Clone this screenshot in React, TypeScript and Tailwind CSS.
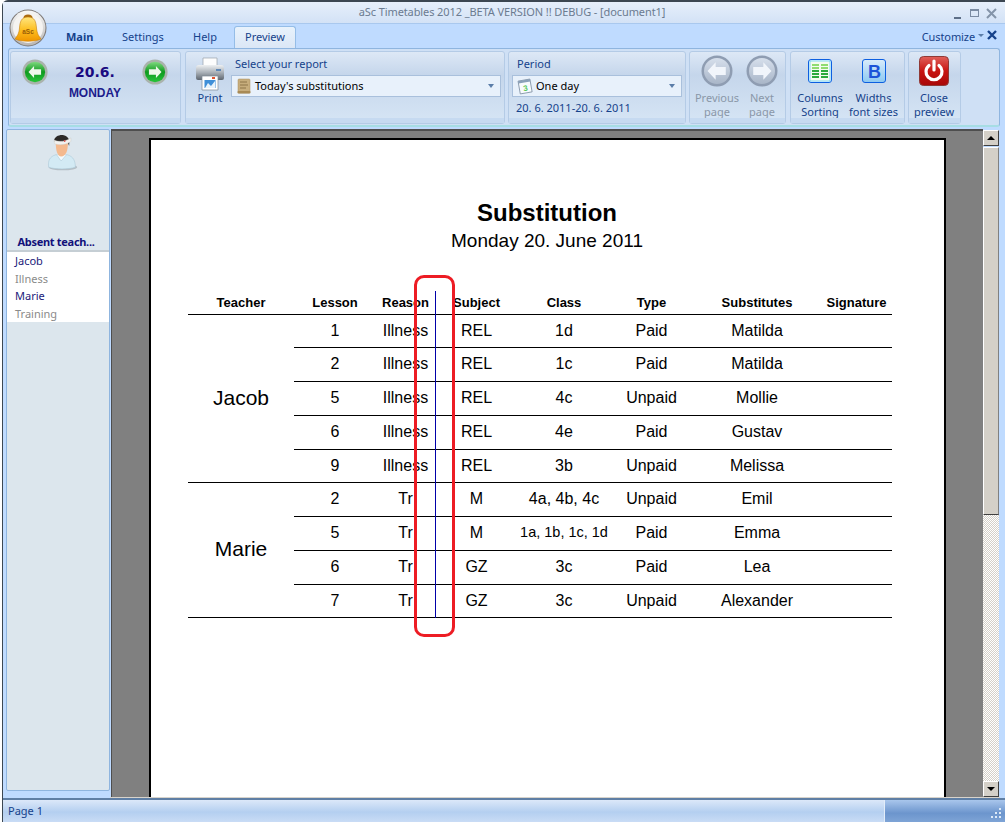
import * as React from "react"

type Row = { lesson: string; reason: string; subject: string; cls: string; type: string; sub: string; h: string; small?: boolean }

const jacob: Row[] = [
  { lesson: "1", reason: "Illness", subject: "REL", cls: "1d", type: "Paid", sub: "Matilda", h: "h-[33px]" },
  { lesson: "2", reason: "Illness", subject: "REL", cls: "1c", type: "Paid", sub: "Matilda", h: "h-[34px] pb-[1px]" },
  { lesson: "5", reason: "Illness", subject: "REL", cls: "4c", type: "Unpaid", sub: "Mollie", h: "h-[34px] pb-[1px]" },
  { lesson: "6", reason: "Illness", subject: "REL", cls: "4e", type: "Paid", sub: "Gustav", h: "h-[34px] pb-[1px]" },
  { lesson: "9", reason: "Illness", subject: "REL", cls: "3b", type: "Unpaid", sub: "Melissa", h: "h-[32px]" },
]

const marie: Row[] = [
  { lesson: "2", reason: "Tr", subject: "M", cls: "4a, 4b, 4c", type: "Unpaid", sub: "Emil", h: "h-[34px] pb-[1px]" },
  { lesson: "5", reason: "Tr", subject: "M", cls: "1a, 1b, 1c, 1d", type: "Paid", sub: "Emma", h: "h-[34px] pb-[1px]", small: true },
  { lesson: "6", reason: "Tr", subject: "GZ", cls: "3c", type: "Paid", sub: "Lea", h: "h-[34px] pb-[1px]" },
  { lesson: "7", reason: "Tr", subject: "GZ", cls: "3c", type: "Unpaid", sub: "Alexander", h: "h-[32px]" },
]

function Group({ className, children }: { className: string; children: React.ReactNode }) {
  return (
    <div className={`flex flex-col rounded-[3px] border border-[#b4cbe6] bg-[linear-gradient(#dde8f6_0%,#c5d6eb_32%,#d6e5f5_100%)] ${className}`}>
      <div className="flex min-h-0 flex-1">{children}</div>
      <div className="h-[5px] shrink-0 bg-[#c6daf1]" />
    </div>
  )
}

function Arrow({ dir, id, grey }: { dir: "l" | "r"; id: string; grey?: boolean }) {
  const size = grey ? 32 : 26
  const shape = dir === "l" ? "M-7 0 L-1 -6.5 L-1 -3 L6.5 -3 L6.5 3 L-1 3 L-1 6.5 Z" : "M7 0 L1 -6.5 L1 -3 L-6.5 -3 L-6.5 3 L1 3 L1 6.5 Z"
  return (
    <svg width={size} height={size} viewBox="-16 -16 32 32" aria-hidden>
      <defs>
        <linearGradient id={id} x1="0" y1="0" x2="0" y2="1">
          {grey ? (
            <>
              <stop offset="0" stopColor="#d6dfec" />
              <stop offset="1" stopColor="#a9b6c8" />
            </>
          ) : (
            <>
              <stop offset="0" stopColor="#7fd97f" />
              <stop offset="0.5" stopColor="#0f9a1f" />
              <stop offset="1" stopColor="#27c43a" />
            </>
          )}
        </linearGradient>
      </defs>
      <circle r="15.5" fill={grey ? "#8f9db2" : "#a9b3ab"} />
      <circle r={grey ? 13 : 12.5} fill={`url(#${id})`} />
      <path d={shape} fill={grey ? "#f1f5fb" : "#eef7ea"} transform={grey ? "scale(1.35)" : "scale(1.15)"} />
    </svg>
  )
}

function Bell() {
  return (
    <svg width="38" height="38" viewBox="0 0 38 38" aria-hidden>
      <defs>
        <linearGradient id="bellRing" x1="0" y1="0" x2="0" y2="1">
          <stop offset="0" stopColor="#f8f8f8" />
          <stop offset="1" stopColor="#b9b6b4" />
        </linearGradient>
        <linearGradient id="bellBody" x1="0" y1="0" x2="0" y2="1">
          <stop offset="0" stopColor="#ffe680" />
          <stop offset="0.55" stopColor="#fdbd1e" />
          <stop offset="1" stopColor="#ef9500" />
        </linearGradient>
      </defs>
      <circle cx="19" cy="19" r="18.5" fill="#7d7875" />
      <circle cx="19" cy="19" r="17.5" fill="url(#bellRing)" />
      <circle cx="19" cy="19" r="15" fill="#f5f3f1" />
      <ellipse cx="19" cy="9" rx="4.5" ry="3.5" fill="#a96a12" />
      <path d="M19 8 C12 8 11 13 10.5 19 C10 25 8 27 6 30 C12 33 26 33 32 30 C30 27 28 25 27.5 19 C27 13 26 8 19 8 Z" fill="url(#bellBody)" stroke="#c97f08" strokeWidth="0.6" />
      <text x="19" y="25" textAnchor="middle" fontSize="6.5" fontWeight="700" fill="#9a5c05" fontFamily="Liberation Sans, sans-serif">aSc</text>
    </svg>
  )
}

function Printer() {
  return (
    <svg width="30" height="34" viewBox="0 0 30 34" aria-hidden>
      <defs>
        <linearGradient id="prBody" x1="0" y1="0" x2="0" y2="1">
          <stop offset="0" stopColor="#eef0f2" />
          <stop offset="0.5" stopColor="#a9b0b7" />
          <stop offset="1" stopColor="#5e666f" />
        </linearGradient>
      </defs>
      <path d="M8 1 H22 V10 H8 Z" fill="#fdfdfd" stroke="#9aa2ab" strokeWidth="0.7" />
      <path d="M1 11 Q1 8 4 8 H26 Q29 8 29 11 V21 Q29 23 27 23 H3 Q1 23 1 21 Z" fill="url(#prBody)" />
      <rect x="21" y="12" width="5" height="2" fill="#5f87b5" />
      <path d="M7 19 H23 V33 H7 Z" fill="#fff" stroke="#7f8a96" strokeWidth="0.7" />
      <rect x="9.5" y="23" width="11" height="8" fill="#3f8fd8" />
      <path d="M10 31 L13 26 L16 29 L20 24 V31 Z" fill="#e8f3fb" />
      <rect x="17" y="20" width="3" height="2" fill="#e0522e" />
    </svg>
  )
}

function ScrollIcon() {
  return (
    <svg width="14" height="16" viewBox="0 0 14 16" aria-hidden>
      <rect x="1" y="1" width="12" height="14" rx="1" fill="#c7ad7c" stroke="#a88e5e" strokeWidth="0.5" />
      <path d="M3 4 H10 M3 7 H11 M3 10 H9" stroke="#8d7448" strokeWidth="1" />
      <rect x="0.5" y="13" width="13" height="2.5" rx="1" fill="#a88a55" />
    </svg>
  )
}

function CalendarIcon() {
  return (
    <svg width="16" height="17" viewBox="0 0 16 17" aria-hidden>
      <g transform="rotate(-10 8 8)">
        <rect x="2" y="2" width="12" height="13" fill="#f8fbfd" stroke="#7c8da1" strokeWidth="0.8" />
        <rect x="2" y="2" width="12" height="2.5" fill="#8aa0b8" />
        <text x="8" y="13" textAnchor="middle" fontSize="8" fontWeight="700" fill="#5ac85a" fontFamily="Liberation Sans, sans-serif">3</text>
      </g>
    </svg>
  )
}

function ColumnsIcon() {
  return (
    <svg width="24" height="24" viewBox="0 0 24 24" aria-hidden>
      <rect x="0.5" y="0.5" width="23" height="23" rx="2.5" fill="#eaf6ff" stroke="#0d5fe0" />
      <rect x="2" y="2" width="20" height="20" fill="#f4fbef" stroke="#58c8f0" strokeWidth="0.7" />
      {[5, 8, 11, 14, 17].map((y) => (
        <g key={y}>
          <rect x="4" y={y} width="7" height="2" fill={y < 9 ? "#8fdc70" : "#2bab3c"} />
          <rect x="13" y={y} width="7" height="2" fill={y < 9 ? "#8fdc70" : "#2bab3c"} />
        </g>
      ))}
    </svg>
  )
}

function WidthsIcon() {
  return (
    <svg width="24" height="24" viewBox="0 0 24 24" aria-hidden>
      <defs>
        <linearGradient id="wdFill" x1="0" y1="0" x2="0" y2="1">
          <stop offset="0" stopColor="#d9ecfb" />
          <stop offset="1" stopColor="#8cc8f2" />
        </linearGradient>
      </defs>
      <rect x="0.5" y="0.5" width="23" height="23" rx="2.5" fill="url(#wdFill)" stroke="#0d5fe0" />
      <text x="12.5" y="18.5" textAnchor="middle" fontSize="18" fontWeight="700" fill="#1b54d8" fontFamily="Liberation Sans, sans-serif">B</text>
    </svg>
  )
}

function PowerIcon() {
  return (
    <svg width="30" height="30" viewBox="0 0 30 30" aria-hidden>
      <defs>
        <linearGradient id="pwFill" x1="0" y1="0" x2="0" y2="1">
          <stop offset="0" stopColor="#e0605a" />
          <stop offset="0.5" stopColor="#c81512" />
          <stop offset="1" stopColor="#a80808" />
        </linearGradient>
      </defs>
      <rect x="0.5" y="0.5" width="29" height="29" rx="4" fill="url(#pwFill)" stroke="#8f3a36" />
      <path d="M10 9.5 A8 8 0 1 0 20 9.5" fill="none" stroke="#fff" strokeWidth="3.2" strokeLinecap="round" />
      <path d="M15 5 V14" fill="none" stroke="#fff" strokeWidth="3.2" strokeLinecap="round" />
    </svg>
  )
}

function Patient() {
  return (
    <svg width="32" height="38" viewBox="0 0 36 42" aria-hidden>
      <ellipse cx="19" cy="37" rx="16" ry="3.5" fill="#b5bec5" />
      <path d="M3 37 C2 30 4 25 11 23 L24 23 C31 25 33 30 33 37 C25 39.5 11 39.5 3 37 Z" fill="#d3eaf4" stroke="#a9c6d6" strokeWidth="0.6" />
      <path d="M12 23 L17 30 L23 23" fill="#f3fafd" stroke="#a9c6d6" strokeWidth="0.6" />
      <path d="M11 9 C11 19 13 25 17 25 C22 25 25 19 24.5 9 Z" fill="#f4b98e" />
      <path d="M9 8 C9 2 16 0 20 1 C25 2 27 6 26 13 L24.5 9 L11 9 Z" fill="#2c2a28" />
      <path d="M9 6.5 C15 9 22 8 28 4 L28 8 C22 12 15 12.5 9.5 10.5 Z" fill="#f2f2f0" stroke="#c5c5c2" strokeWidth="0.4" />
      <circle cx="21" cy="7.5" r="1" fill="#d9534f" />
    </svg>
  )
}

function Triangle() {
  return <span className="h-0 w-0 border-x-[3.5px] border-t-[4px] border-x-transparent border-t-[#5b7da8]" />
}

function Combo({ icon, label }: { icon: React.ReactNode; label: string }) {
  return (
    <div className="flex h-[22px] items-center border border-[#a9c0dc] bg-[#e8f1fb] pr-[6px]">
      <span className="flex w-[23px] shrink-0 justify-center">{icon}</span>
      <span className="flex-1 text-[11px] text-black">{label}</span>
      <Triangle />
    </div>
  )
}

function Tool({ icon, lines, muted, className }: { icon: React.ReactNode; lines: string[]; muted?: boolean; className: string }) {
  return (
    <div className={`flex flex-col items-center ${className}`}>
      <div className="mb-[2px] flex h-[37px] items-center justify-center">{icon}</div>
      {lines.map((l) => (
        <div key={l} className={`whitespace-nowrap text-center text-[11px] leading-[13.5px] ${muted ? "text-[#8a97a8]" : "text-[#15428b]"}`}>
          {l}
        </div>
      ))}
    </div>
  )
}

function Cell({ className, children }: { className: string; children: React.ReactNode }) {
  return <div className={`flex items-center justify-center whitespace-nowrap ${className}`}>{children}</div>
}

function Lines({ rows }: { rows: Row[] }) {
  return (
    <div className="flex flex-1 flex-col">
      {rows.map((r, i) => (
        <div key={r.lesson + r.sub} className={`flex text-[16px] text-black ${r.h} ${i < rows.length - 1 ? "border-b border-black" : ""}`}>
          <Cell className="w-[82px]">{r.lesson}</Cell>
          <Cell className="w-[59px]">{r.reason}</Cell>
          <Cell className="w-[83px]">{r.subject}</Cell>
          <Cell className={`w-[92px] ${r.small ? "text-[14.5px]" : ""}`}>{r.cls}</Cell>
          <Cell className="w-[83px]">{r.type}</Cell>
          <Cell className="w-[128px]">{r.sub}</Cell>
          <Cell className="w-[71px]">{""}</Cell>
        </div>
      ))}
    </div>
  )
}

function Teacher({ name, rows }: { name: string; rows: Row[] }) {
  return (
    <div className="flex border-b border-black">
      <div className="flex w-[106px] shrink-0 items-center justify-center pb-[2px] text-[21px] text-black">{name}</div>
      <Lines rows={rows} />
    </div>
  )
}

function Scrollbar() {
  const btn = "flex h-[16px] w-[16px] shrink-0 items-center justify-center border border-t-white border-l-white border-r-[#404040] border-b-[#404040] bg-[#d4d0c8]"
  return (
    <div className="flex w-[17px] shrink-0 flex-col pt-[1px]">
      <div className={btn}>
        <span className="h-0 w-0 border-x-[4px] border-b-[4px] border-x-transparent border-b-black" />
      </div>
      <div className="mt-[1px] h-[368px] w-[16px] shrink-0 border border-t-white border-l-white border-r-[#808080] border-b-[#404040] bg-[#d4d0c8]" />
      <div className="w-[16px] flex-1 bg-[repeating-conic-gradient(#d4d0c8_0_25%,#ffffff_0_50%)] bg-[length:2px_2px]" />
      <div className={btn}>
        <span className="h-0 w-0 border-x-[4px] border-t-[4px] border-x-transparent border-t-black" />
      </div>
    </div>
  )
}

export default function App() {
  return (
    <div className="relative flex h-[822px] w-[1005px] flex-col overflow-hidden bg-white pl-[2px] text-[11px] [font-family:Noto_Sans,sans-serif]">
      <div className="flex h-full flex-col rounded-tl-[6px] border-l border-t-2 border-[#3c4752] bg-[#bfdbff]">
        {/* title bar */}
        <div className="relative flex h-[21px] shrink-0 items-center justify-center bg-[linear-gradient(#e6effb,#d3e2f6)] pl-[16px] text-[11px] tracking-[-0.1px] text-[#6b7b90]">
          aSc Timetables 2012 _BETA VERSION !! DEBUG - [document1]
          <div className="absolute right-[8px] top-[6px] flex items-start">
            <span className="mt-[9px] h-[2px] w-[7px] bg-[#5d6f88]" />
            <span className="ml-[9px] mt-[1px] h-[8px] w-[9px] border border-t-2 border-[#7a8ba3]" />
            <svg className="ml-[7px]" width="11" height="11" viewBox="0 0 11 11" aria-hidden>
              <path d="M1 1 L10 10 M10 1 L1 10" stroke="#8494a9" strokeWidth="2" />
            </svg>
          </div>
        </div>

        {/* tabs */}
        <div className="flex h-[25px] shrink-0 items-end border-t border-[#a9c8ee] pl-[63px] text-[#15428b]">
          <div className="mb-[3px] w-[56px] text-[11px] font-bold">Main</div>
          <div className="mb-[3px] w-[71px] text-[11px]">Settings</div>
          <div className="mb-[3px] w-[41px] text-[11px]">Help</div>
          <div className="flex h-[22px] w-[62px] items-center justify-center rounded-t-[3px] border border-b-0 border-[#95bde7] bg-[linear-gradient(#e8f2fc,#dbe7f6)] text-[11px]">Preview</div>
          <div className="flex-1" />
          <div className="mb-[3px] mr-[8px] flex items-center gap-[3px] text-[11px] tracking-[-0.1px]">
            Customize
            <span className="mb-[2px] h-0 w-0 border-x-[3px] border-t-[3px] border-x-transparent border-t-[#5b7da8]" />
            <svg className="mt-[-3px]" width="10" height="10" viewBox="0 0 10 10" aria-hidden>
              <path d="M1 1 L9 9 M9 1 L1 9" stroke="#15428b" strokeWidth="2.4" />
            </svg>
          </div>
        </div>

        {/* ribbon */}
        <div className="mx-[5px] flex h-[79px] shrink-0 gap-[3px] rounded-[3px] border border-b-2 border-[#8fb5df] border-b-[#a6dde4] bg-[#cfe0f5] pb-[1px] pl-[1px] pt-[2px]">
          <Group className="w-[171px]">
            <div className="flex w-full items-start pt-[6px]">
              <div className="ml-[11px] flex w-[26px] justify-center pt-[1px]">
                <Arrow dir="l" id="greenL" />
              </div>
              <div className="flex flex-1 flex-col items-center pt-[5px]">
                <div className="text-[14px] font-bold leading-[18px] text-[#1a0a80] [font-family:DejaVu_Sans,sans-serif]">20.6.</div>
                <div className="mt-[4px] text-[12px] font-bold leading-[16px] text-[#1c1c8c] [font-family:Liberation_Sans,sans-serif]">MONDAY</div>
              </div>
              <div className="mr-[12px] flex w-[26px] justify-center pt-[1px]">
                <Arrow dir="r" id="greenR" />
              </div>
            </div>
          </Group>
          <Group className="ml-[1px] w-[320px]">
            <div className="flex w-[45px] shrink-0 flex-col items-center pl-[3px] pt-[5px] text-[#15428b]">
              <Printer />
              <div className="mt-[-1px]">Print</div>
            </div>
            <div className="flex flex-1 flex-col pr-[3px] pt-[4px]">
              <div className="h-[19px] pl-[4px] text-[#15428b]">Select your report</div>
              <Combo icon={<ScrollIcon />} label="Today's substitutions" />
            </div>
          </Group>
          <Group className="w-[178px]">
            <div className="flex flex-1 flex-col px-[3px] pt-[4px]">
              <div className="h-[19px] pl-[5px] text-[#15428b]">Period</div>
              <Combo icon={<CalendarIcon />} label="One day" />
              <div className="mt-[3px] pl-[4px] text-[#15428b]">20. 6. 2011-20. 6. 2011</div>
            </div>
          </Group>
          <Group className="w-[97px]">
            <div className="flex w-full pl-[3px]">
              <Tool className="w-[48px]" muted icon={<Arrow dir="l" id="greyL" grey />} lines={["Previous", "page"]} />
              <Tool className="w-[42px]" muted icon={<Arrow dir="r" id="greyR" grey />} lines={["Next", "page"]} />
            </div>
          </Group>
          <Group className="ml-[1px] w-[115px]">
            <div className="flex w-full pl-[1px]">
              <Tool className="w-[56px]" icon={<ColumnsIcon />} lines={["Columns", "Sorting"]} />
              <Tool className="w-[51px]" icon={<WidthsIcon />} lines={["Widths", "font sizes"]} />
            </div>
          </Group>
          <Group className="w-[53px]">
            <div className="flex w-full justify-center pr-[1px]">
              <Tool className="w-[50px]" icon={<PowerIcon />} lines={["Close", "preview"]} />
            </div>
          </Group>
        </div>

        {/* body */}
        <div className="mt-[2px] flex min-h-0 flex-1 pl-[3px] pr-[5px]">
          <div className="mb-[7px] flex w-[104px] shrink-0 flex-col items-center rounded-[2px] border border-[#8fb5df] bg-[#dce6ed]">
            <div className="h-[104px] pl-[7px] pt-[4px]">
              <Patient />
            </div>
            <div className="h-[15px] w-full pr-[4px] text-center text-[11px] font-bold leading-[15px] tracking-[-0.3px] text-[#10107a]">Absent teach...</div>
            <div className="mt-[1px] w-full border-t-2 border-[#c5ced4] bg-white pl-[8px] text-[11px] leading-[17.5px]">
              <div className="text-[#1a1a7a]">Jacob</div>
              <div className="text-[#8a8a8a]">Illness</div>
              <div className="text-[#1a1a7a]">Marie</div>
              <div className="text-[#8a8a8a]">Training</div>
            </div>
          </div>
          <div className="flex min-w-0 flex-1 border-b border-[#d8d4cc]">
            <div className="ml-[1px] min-w-0 flex-1 overflow-hidden border-l border-t-2 border-[#4e4e4e] bg-[#808080] pl-[37px] pt-[7px]">
              <div className="h-full w-[797px] border-x-2 border-t-2 border-black bg-white [font-family:Liberation_Sans,sans-serif]">
                <div className="pr-[1px] pt-[59px] text-center text-[24px] font-bold leading-[28px] text-black">Substitution</div>
                <div className="mt-[2px] pr-[1px] text-center text-[19px] leading-[24px] text-black">Monday 20. June 2011</div>
                <div className="relative ml-[37px] mt-[38px] w-[704px]">
                  <div className="flex h-[24px] items-end border-b border-black pb-[4px] text-[13px] font-bold leading-[15px] text-black">
                    <Cell className="w-[106px]">Teacher</Cell>
                    <Cell className="w-[82px]">Lesson</Cell>
                    <Cell className="w-[59px]">Reason</Cell>
                    <Cell className="w-[83px]">Subject</Cell>
                    <Cell className="w-[92px]">Class</Cell>
                    <Cell className="w-[83px]">Type</Cell>
                    <Cell className="w-[128px]">Substitutes</Cell>
                    <Cell className="w-[71px]">Signature</Cell>
                  </div>
                  <Teacher name="Jacob" rows={jacob} />
                  <Teacher name="Marie" rows={marie} />
                  {/* column drag marker and the red annotation over it */}
                  <div className="absolute left-[247px] top-0 h-[327px] w-px bg-[#0000a8]" />
                  <div className="absolute left-[226px] top-[-16px] h-[362px] w-[41px] rounded-[10px] border-[3px] border-[#ed1c24]" />
                </div>
              </div>
            </div>
            <Scrollbar />
          </div>
        </div>

        {/* status bar */}
        <div className="flex h-[24px] shrink-0 border-t-2 border-[#5f7fa5]">
          <div className="flex flex-1 items-center bg-[linear-gradient(#dce8f9,#b4cff0_55%,#c9dcf5)] pl-[5px] text-[#15428b]">Page 1</div>
          <div className="relative w-[121px] border-l border-[#e3edf9] bg-[linear-gradient(#a9c6ec,#6c95cd_60%,#7ea4d6)]">
            <svg className="absolute bottom-[3px] right-[3px]" width="11" height="11" viewBox="0 0 11 11" aria-hidden>
              <path d="M8 0h2v2H8zM4 4h2v2H4zM8 4h2v2H8zM0 8h2v2H0zM4 8h2v2H4zM8 8h2v2H8z" fill="#ddeaf8" />
            </svg>
          </div>
        </div>
      </div>

      {/* app button over the title bar and tabs */}
      <div className="absolute left-[9px] top-[9px]">
        <Bell />
      </div>
    </div>
  )
}
